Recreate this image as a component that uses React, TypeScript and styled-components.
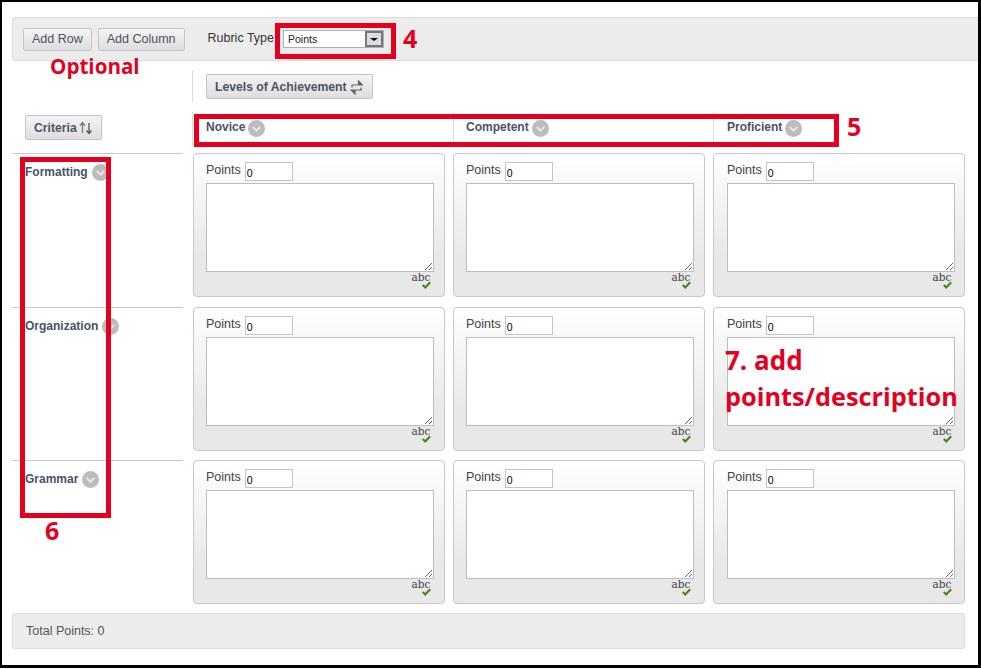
import React from "react";
import styled, { createGlobalStyle } from "styled-components";

const GlobalStyle = createGlobalStyle`
    html, body {
        margin: 0;
        padding: 0;
        background: #fff;
    }
    body {
        font-family: "Liberation Sans", Arial, sans-serif;
        font-size: 12.5px;
        color: #444;
    }
`;

const Frame = styled.div`
    position: relative;
    box-sizing: border-box;
    width: 981px;
    height: 668px;
    padding: 15px 0 0 10px;
    border: solid #000;
    border-width: 2px 3px 3px 2px;
    overflow: hidden;
`;

const Toolbar = styled.div`
    display: flex;
    align-items: center;
    box-sizing: border-box;
    height: 44px;
    padding: 0 10px;
    background: #ececec;
    border: 1px solid #ddd;
    border-right: none;
    border-radius: 3px 0 0 3px;
`;

const Button = styled.button<{ $bold?: boolean }>`
    display: inline-flex;
    align-items: center;
    box-sizing: border-box;
    height: ${(p) => (p.$bold ? 25 : 23)}px;
    padding: 0 8px;
    border: 1px solid #c4c4c4;
    border-radius: 2px;
    background: linear-gradient(#f4f4f4, #dedede);
    font-family: inherit;
    font-size: ${(p) => (p.$bold ? 12.2 : 12.5)}px;
    font-weight: ${(p) => (p.$bold ? 700 : 400)};
    color: #4d5560;
`;

const AddColumn = styled(Button)`
    margin-left: 6px;
`;

const RubricLabel = styled.span`
    margin: -3px 0 0 23px;
    color: #333;
`;

const FakeSelect = styled.div`
    display: flex;
    align-items: center;
    justify-content: space-between;
    box-sizing: border-box;
    width: 101px;
    height: 18px;
    margin-left: 9px;
    padding-left: 4px;
    background: #fff;
    border: 1px solid #a9b0bb;
    font-size: 10.5px;
    color: #222;
`;

const SelectArrow = styled.span`
    display: flex;
    align-items: center;
    justify-content: center;
    box-sizing: border-box;
    width: 18px;
    height: 16px;
    background: #ddd;
    border: 2px solid #777;
    &::after {
        content: "";
        border: 4px solid transparent;
        border-top: 3px solid #000;
        border-bottom: none;
    }
`;

const LevelsRow = styled.div`
    box-sizing: border-box;
    height: 32px;
    margin: 9px 0 10px 180px;
    padding: 4px 0 0 13px;
    border-left: 1px solid #ddd;
`;

const TableGrid = styled.div`
    display: grid;
    grid-template-columns: 173px repeat(3, 252px);
    column-gap: 8px;
`;

const HeadGrid = styled(TableGrid)`
    height: 33px;
    margin-bottom: 8px;
`;

const CriteriaCell = styled.div`
    padding: 3px 0 0 13px;
`;

const ColumnHead = styled.div<{ $index: number }>`
    display: flex;
    align-items: flex-start;
    gap: 3px;
    margin-left: ${(p) => (p.$index === 0 ? -1 : 0)}px;
    padding: 8px 0 0 ${(p) => (p.$index === 1 ? 12 : 13)}px;
    border-left: 1px solid #ddd;
    font-size: 12px;
    font-weight: 700;
    color: #47536a;
`;

const BodyGrid = styled(TableGrid)`
    grid-template-rows: 154px 153px 153px;
`;

const RowHead = styled.div`
    display: flex;
    align-items: flex-start;
    gap: 4px;
    height: 100%;
    margin-right: 2px;
    padding: 10px 0 0 13px;
    box-sizing: border-box;
    border-top: 1px solid #c8c8c8;
    font-size: 12px;
    line-height: 16px;
    font-weight: 700;
    color: #47536a;
`;

const Circle = styled.svg`
    flex: none;
    width: 17px;
    height: 17px;
`;

const Card = styled.div<{ $inset?: boolean }>`
    position: relative;
    box-sizing: border-box;
    height: 144px;
    padding: 8px 10px 0 ${(p) => (p.$inset ? 13 : 12)}px;
    background: linear-gradient(#fff, #e8e8e8 72%);
    border: 1px solid #c8c8c8;
    border-radius: 4px;
`;

const PointsRow = styled.label`
    display: flex;
    align-items: flex-start;
    gap: 4px;
    height: 21px;
    line-height: 17px;
`;

const PointsInput = styled.input`
    box-sizing: border-box;
    width: 48px;
    height: 19px;
    padding: 2px 1px 0;
    border: 1px solid #c4c4c4;
    background: #fff;
    font-family: inherit;
    font-size: 10.5px;
    color: #000;
    outline: none;
`;

const DescriptionBox = styled.textarea`
    display: block;
    box-sizing: border-box;
    width: 228px;
    height: 89px;
    margin: 0;
    padding: 2px;
    background: #fff;
    border: 1px solid #bdbdbd;
    outline: none;
`;

const SpellCheck = styled.div<{ $inset?: boolean }>`
    position: absolute;
    right: ${(p) => (p.$inset ? 12 : 13)}px;
    bottom: 6px;
    width: 20px;
    height: 19px;
    font-family: "DejaVu Serif", serif;
    font-size: 10.5px;
    line-height: 13px;
    color: #444;
    text-align: center;
    svg {
        position: absolute;
        right: 0;
        bottom: 1px;
        width: 9px;
        height: 8px;
    }
`;

const TotalBar = styled.div`
    display: flex;
    align-items: center;
    box-sizing: border-box;
    width: 953px;
    height: 36px;
    padding-left: 13px;
    background: #ececec;
    border: 1px solid #ddd;
    border-radius: 3px;
    color: #555;
`;

const RedBox = styled.div<{ $x: number; $y: number; $w: number; $h: number }>`
    position: absolute;
    left: ${(p) => p.$x - 2}px;
    top: ${(p) => p.$y - 2}px;
    box-sizing: border-box;
    width: ${(p) => p.$w}px;
    height: ${(p) => p.$h}px;
    border: 5px solid #e6001f;
`;

const RedNote = styled.div<{ $x: number; $y: number; $size?: number }>`
    position: absolute;
    left: ${(p) => p.$x - 2}px;
    top: ${(p) => p.$y - 2}px;
    font-family: "Open Sans", sans-serif;
    font-size: ${(p) => p.$size ?? 20.6}px;
    font-weight: 700;
    line-height: 1;
    white-space: nowrap;
    color: #e6001f;
`;

const Chevron = () => (
    <Circle viewBox="0 0 17 17">
        <circle cx="8.5" cy="8.5" r="8.5" fill="#bcbcbc" />
        <path d="M4.8 7 L8.5 10.6 L12.2 7" fill="none" stroke="#e8e8e8" strokeWidth="2" />
    </Circle>
);

const SwapIcon = () => (
    <svg width="13" height="16" viewBox="0 0 13 16" style={{ marginLeft: 3, marginRight: 1 }}>
        <path d="M2 6 H9 M8.5 2 L12.5 6 L8.5 6 Z" stroke="#666" strokeWidth="1.2" fill="#666" />
        <path d="M12 11 H4.5 M5 15 L1 11 L5 11 Z" stroke="#666" strokeWidth="1.2" fill="#666" />
        <path d="M2 6 V8.5 M11 11 V8.5" stroke="#666" strokeWidth="1.2" fill="none" />
    </svg>
);

const SortIcon = () => (
    <svg width="14" height="14" viewBox="0 0 14 14" style={{ marginLeft: 2 }}>
        <path d="M3.5 12 V2 M1 4.5 L3.5 1.5 L6 4.5" stroke="#777" strokeWidth="1.3" fill="none" />
        <path d="M10 2 V12 M7.5 9.5 L10 12.5 L12.5 9.5" stroke="#555" strokeWidth="1.3" fill="none" />
    </svg>
);

const CheckMark = () => (
    <svg viewBox="0 0 11 9">
        <path d="M1 4.5 L4 7.5 L10 1.2" fill="none" stroke="#3f8a12" strokeWidth="2.6" />
    </svg>
);

const LevelCard: React.FC<{ inset?: boolean }> = ({ inset }) => (
    <Card $inset={inset}>
        <PointsRow>
            Points
            <PointsInput readOnly defaultValue="0" />
        </PointsRow>
        <DescriptionBox readOnly />
        <SpellCheck $inset={inset}>
            abc
            <CheckMark />
        </SpellCheck>
    </Card>
);

const levels = ["Novice", "Competent", "Proficient"];
const criteria = ["Formatting", "Organization", "Grammar"];

const App: React.FC = () => {
    return (
        <Frame>
            <GlobalStyle />
            <Toolbar>
                <Button>Add Row</Button>
                <AddColumn>Add Column</AddColumn>
                <RubricLabel>Rubric Type</RubricLabel>
                <FakeSelect>
                    Points
                    <SelectArrow />
                </FakeSelect>
            </Toolbar>
            <LevelsRow>
                <Button $bold>
                    Levels of Achievement
                    <SwapIcon />
                </Button>
            </LevelsRow>
            <HeadGrid>
                <CriteriaCell>
                    <Button $bold>
                        Criteria
                        <SortIcon />
                    </Button>
                </CriteriaCell>
                {levels.map((level, i) => (
                    <ColumnHead key={level} $index={i}>
                        {level}
                        <Chevron />
                    </ColumnHead>
                ))}
            </HeadGrid>
            <BodyGrid>
                {criteria.map((name) => (
                    <React.Fragment key={name}>
                        <RowHead>
                            {name}
                            <Chevron />
                        </RowHead>
                        <LevelCard />
                        <LevelCard />
                        <LevelCard inset />
                    </React.Fragment>
                ))}
            </BodyGrid>
            <TotalBar>Total Points: 0</TotalBar>

            <RedBox $x={275} $y={23} $w={121} $h={36} />
            <RedBox $x={194} $y={114} $w={645} $h={33} />
            <RedBox $x={20} $y={157} $w={91} $h={361} />
            <RedNote $x={50} $y={56}>Optional</RedNote>
            <RedNote $x={403} $y={26} $size={25}>4</RedNote>
            <RedNote $x={847} $y={114} $size={25}>5</RedNote>
            <RedNote $x={45} $y={518} $size={25}>6</RedNote>
            <RedNote $x={725} $y={347} $size={26}>7. add</RedNote>
            <RedNote $x={725} $y={384} $size={25.3}>points/description</RedNote>
        </Frame>
    );
};

export default App;
